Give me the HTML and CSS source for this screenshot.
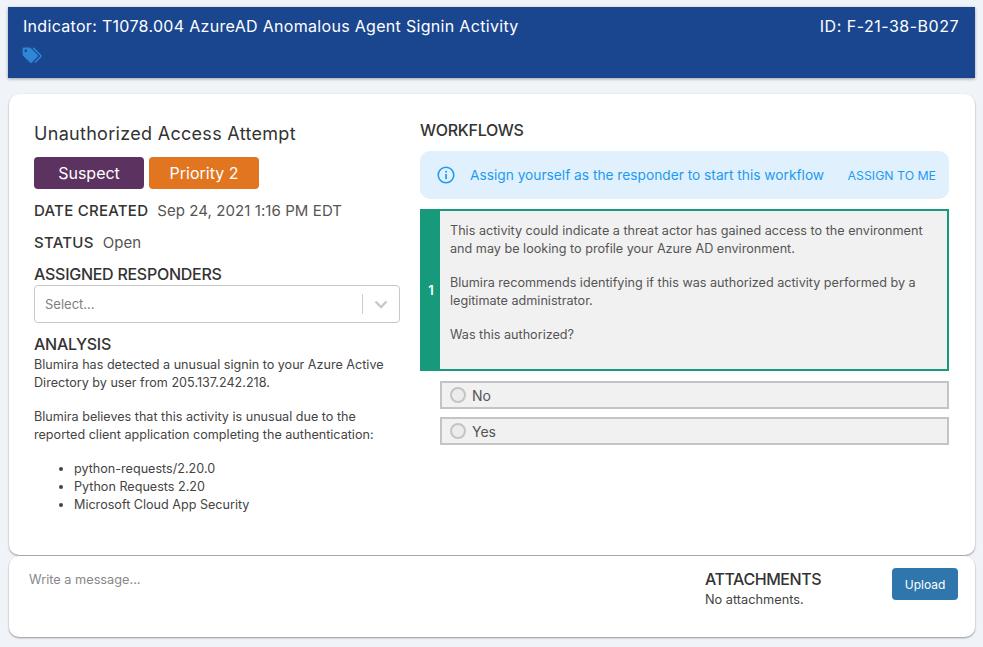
FILE: index.html
```html
<!DOCTYPE html>
<html lang="en">
<head>
<meta charset="utf-8">
<title>Finding</title>
<link rel="stylesheet" href="styles.css">
</head>
<body>
<header class="banner">
  <div class="banner-row">
    <span>Indicator: T1078.004 AzureAD Anomalous Agent Signin Activity</span>
    <span class="finding-id">ID: F-21-38-B027</span>
  </div>
  <svg class="tags" width="21" height="17" viewBox="0 0 21 17" aria-hidden="true">
    <path fill="#2f86d6" d="M1.6 0.6H7.6Q8.4 0.6 9 1.2L15.6 7.8Q16.6 8.8 15.6 9.8L10 15.6Q9 16.6 8 15.6L1.3 9Q0.6 8.3 0.6 7.5V1.6Q0.6 0.6 1.6 0.6Z"/>
    <circle cx="3.8" cy="3.8" r="1.3" fill="#1a4690"/>
    <path fill="none" stroke="#2f86d6" stroke-width="1.5" d="M11.2 0.9L18.6 8.2Q19.4 8.9 18.6 9.8L13 15.6"/>
  </svg>
</header>

<main class="card main-card">
  <section class="left">
    <h1 class="title">Unauthorized Access Attempt</h1>
    <div class="chips">
      <span class="chip chip-purple">Suspect</span>
      <span class="chip chip-orange">Priority 2</span>
    </div>
    <p class="field"><b>DATE CREATED</b><span>Sep 24, 2021 1:16 PM EDT</span></p>
    <p class="field field-status"><b>STATUS</b><span>Open</span></p>
    <h2 class="label label-resp">ASSIGNED RESPONDERS</h2>
    <div class="select">
      <span class="select-text">Select...</span>
      <span class="select-sep"></span>
      <svg class="select-arrow" width="14" height="9" viewBox="0 0 14 9" aria-hidden="true"><path d="M1.5 1.5L7 7L12.5 1.5" fill="none" stroke="#c9c9c9" stroke-width="2.4"/></svg>
    </div>
    <h2 class="label label-analysis">ANALYSIS</h2>
    <div class="analysis">
      <p>Blumira has detected a unusual signin to your Azure Active Directory by user from 205.137.242.218.</p>
      <p>Blumira believes that this activity is unusual due to the reported client application completing the authentication:</p>
      <ul>
        <li>python-requests/2.20.0</li>
        <li>Python Requests 2.20</li>
        <li>Microsoft Cloud App Security</li>
      </ul>
    </div>
  </section>

  <section class="right">
    <h2 class="label workflows">WORKFLOWS</h2>
    <div class="alert">
      <svg width="18" height="18" viewBox="0 0 18 18" aria-hidden="true">
        <circle cx="9" cy="9" r="7.8" fill="none" stroke="#1c9bf0" stroke-width="1.6"/>
        <rect x="8.2" y="8" width="1.7" height="5.2" fill="#1c9bf0"/>
        <rect x="8.2" y="4.8" width="1.7" height="1.8" fill="#1c9bf0"/>
      </svg>
      <span class="alert-text">Assign yourself as the responder to start this workflow</span>
      <span class="alert-action">ASSIGN TO ME</span>
    </div>
    <div class="step">
      <div class="step-num">1</div>
      <div class="step-body">
        <p>This activity could indicate a threat actor has gained access to the environment and may be looking to profile your Azure AD environment.</p>
        <p>Blumira recommends identifying if this was authorized activity performed by a legitimate administrator.</p>
        <p>Was this authorized?</p>
      </div>
    </div>
    <div class="options">
      <div class="option"><span class="radio"></span>No</div>
      <div class="option"><span class="radio"></span>Yes</div>
    </div>
  </section>
</main>

<footer class="card foot-card">
  <div class="message">Write a message...</div>
  <div class="attach">
    <h2 class="label attach-label">ATTACHMENTS</h2>
    <p>No attachments.</p>
  </div>
  <button class="upload" type="button">Upload</button>
</footer>
</body>
</html>
```

FILE: styles.css
```css
* { box-sizing: border-box; }
html, body { height: 100%; }
body {
  margin: 0;
  padding: 7px 8px 0 8px;
  background: #f0f4f8;
  font-family: Inter, "Liberation Sans", sans-serif;
  color: #333;
  overflow: hidden;
}
p, h1, h2, ul { margin: 0; font-weight: 400; }

.banner {
  width: 967px;
  height: 71px;
  background: #1a4690;
  color: #fff;
  padding: 9px 16px 0 15px;
  box-shadow: 0 1px 3px rgba(0,0,0,.35);
}
.banner-row {
  display: flex;
  justify-content: space-between;
  font-size: 16px;
  line-height: 21px;
  letter-spacing: 0.31px;
}
.finding-id { letter-spacing: 0.5px; }
.tags { display: block; margin-top: 10px; margin-left: -1px; }

.card {
  background: #fff;
  width: 966px;
  margin-left: 1px;
  border-radius: 10px;
  box-shadow: 0 1px 2px rgba(0,0,0,.4);
}
.main-card {
  margin-top: 16px;
  height: 461px;
  display: flex;
  padding: 26px 26px 0 25px;
}
.left { width: 366px; margin-right: 20px; flex: none; }
.right { width: 529px; flex: none; }

.title { font-size: 18px; line-height: 24px; margin-top: 2px; color: #333; letter-spacing: 0.3px; }
.chips { display: flex; gap: 5px; margin-top: 11px; }
.chip {
  width: 110px;
  height: 32px;
  border-radius: 4px;
  color: #fff;
  font-size: 16px;
  line-height: 32px;
  text-align: center;
}
.chip-purple { background: #5c3260; }
.chip-orange { background: #e27520; }

.field { font-size: 15px; line-height: 20px; margin-top: 12px; color: #555; display: flex; gap: 9px; letter-spacing: 0.08px; }
.field b { font-weight: 500; color: #333; letter-spacing: 0.25px; }
.field-status { margin-top: 12px; }

.label { font-size: 16px; line-height: 20px; font-weight: 500; color: #333; letter-spacing: -0.27px; }
.label-resp { margin-top: 11px; }
.select {
  width: 366px;
  height: 38px;
  margin-top: 1px;
  border: 1px solid #c9c9c9;
  border-radius: 4px;
  display: flex;
  align-items: center;
  padding-left: 10px;
}
.select-text { font-size: 13px; color: #808080; flex: 1; }
.select-sep { width: 1px; height: 20px; background: #ccc; }
.select-arrow { margin: 1px 11px 0 11px; }
.label-analysis { margin-top: 11px; }
.analysis { font-size: 12.6px; line-height: 18px; color: #444; margin-top: 2px; }
.analysis p { margin-bottom: 15.5px; }
.analysis ul { padding-left: 40px; margin-top: 16px; }

.workflows { margin-top: 0; line-height: 20px; }
.alert {
  height: 48px;
  margin-top: 11px;
  background: #e1f0fd;
  border-radius: 10px;
  display: flex;
  align-items: center;
  padding: 0 13px 0 17px;
  color: #1c9bf0;
  font-size: 13.72px;
}
.alert-text { margin-left: 15px; flex: 1; }
.alert-action { font-size: 12.3px; }

.step {
  height: 162px;
  margin-top: 10px;
  display: flex;
  border: 2px solid #179a7c;
  background: #f1f1f1;
}
.step-num {
  width: 18px;
  flex: none;
  background: #179a7c;
  color: #fff;
  font-size: 13px;
  font-weight: 600;
  display: flex;
  align-items: center;
  justify-content: center;
}
.step-body { padding: 11px 10px 0 10px; font-size: 12.63px; line-height: 18px; color: #555; }
.step-body p { margin-bottom: 16px; }

.options { margin: 10px 0 0 20px; display: flex; flex-direction: column; gap: 8px; }
.option {
  height: 28px;
  border: 2px solid #c4c4c4;
  background: #f1f1f1;
  display: flex;
  align-items: center;
  padding-left: 8px;
  font-size: 14px;
  color: #555;
}
.radio {
  width: 16px;
  height: 16px;
  border-radius: 50%;
  border: 2px solid #c4c4c4;
  background: #ececec;
  margin-right: 6px;
}

.foot-card {
  margin-top: 1px;
  height: 81px;
  display: flex;
  align-items: flex-start;
  padding: 0 17px 0 20px;
}
.message { flex: 1; font-size: 12.75px; color: #888; margin-top: 15px; line-height: 18px; }
.attach { width: 187px; margin-top: 13px; }
.attach-label { letter-spacing: -0.45px; }
.attach p { font-size: 12.75px; line-height: 18px; color: #444; margin-top: 2px; }
.upload {
  width: 66px;
  height: 32px;
  margin-top: 12px;
  background: #2f76ad;
  color: #fff;
  border: 0;
  border-radius: 4px;
  font: 12px Inter, "Liberation Sans", sans-serif;
}
```
